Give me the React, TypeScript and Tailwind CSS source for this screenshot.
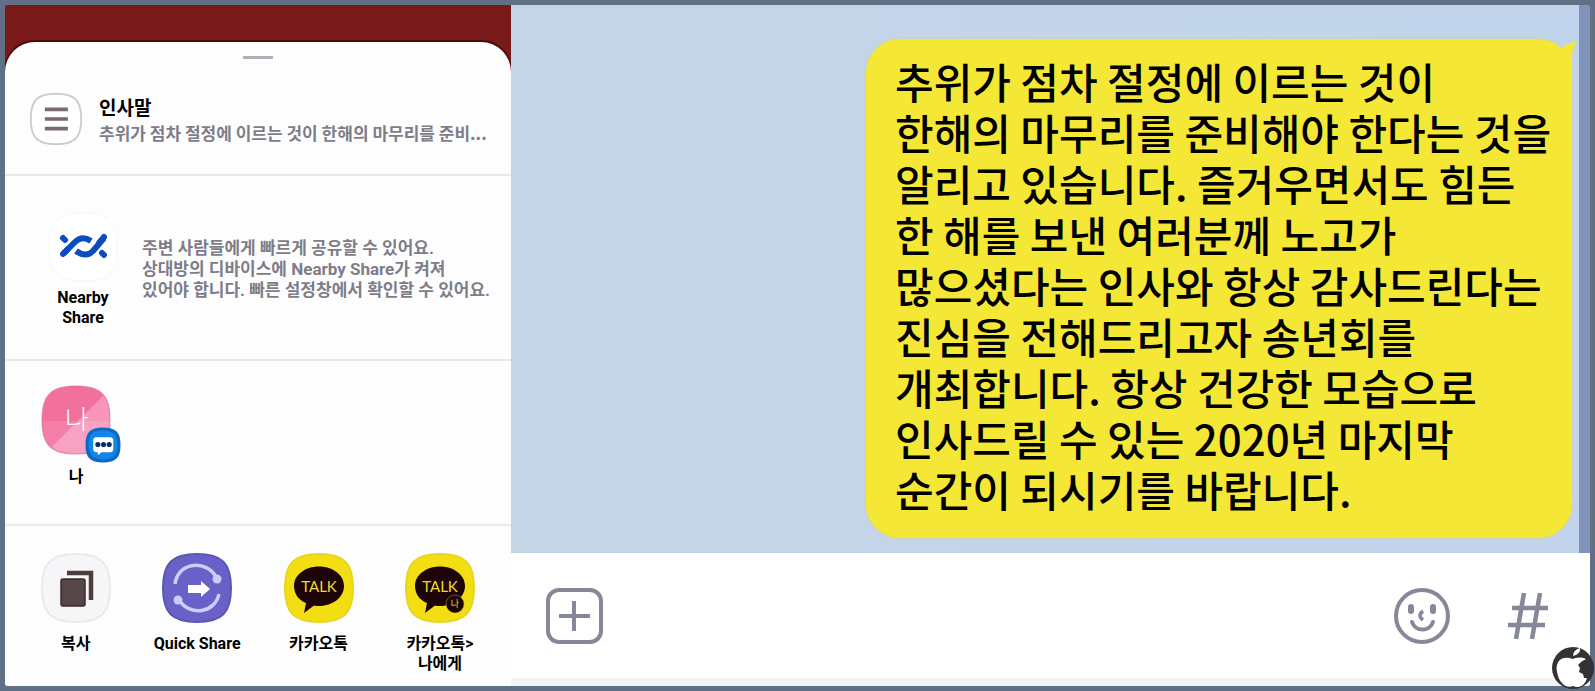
import React from "react";

const MESSAGE = [
  "추위가 점차 절정에 이르는 것이",
  "한해의 마무리를 준비해야 한다는 것을",
  "알리고 있습니다. 즐거우면서도 힘든",
  "한 해를 보낸 여러분께 노고가",
  "많으셨다는 인사와 항상 감사드린다는",
  "진심을 전해드리고자 송년회를",
  "개최합니다. 항상 건강한 모습으로",
  "인사드릴 수 있는 2020년 마지막",
  "순간이 되시기를 바랍니다.",
].join("\n");

const SQUIRCLE = "M35 1C60 1 69 10 69 35S60 69 35 69 1 60 1 35 10 1 35 1Z";

function NearbyIcon() {
  return (
    <svg viewBox="0 0 70 70" className="size-[70px]" fill="none">
      <path d={SQUIRCLE} fill="#fff" stroke="#f6f6f8" strokeWidth="1" />
      <g stroke="#0d4bc0" strokeWidth="6">
        <path d="M15 42L27 30Q34 23 43 29" />
        <path d="M28 39Q38 46 45 39L56 26" />
        <path d="M15 42L20 37M51 31L56 25" strokeLinecap="round" />
      </g>
      <path d="M15 26L17 28M54 41L56 43" stroke="#0d4bc0" strokeWidth="6" strokeLinecap="round" />
    </svg>
  );
}

function CopyIcon() {
  return (
    <svg viewBox="0 0 70 70" className="size-[70px]" fill="none">
      <path d={SQUIRCLE} fill="#f6f6f9" stroke="#e9e9ec" strokeWidth="2" />
      <path d="M26 20H50V47" stroke="#4a3d3c" strokeWidth="4.500" />
      <rect x="20" y="26" width="24" height="27" rx="2" fill="#564645" stroke="#372d2c" strokeWidth="1.500" />
    </svg>
  );
}

function QuickShareIcon() {
  return (
    <svg viewBox="0 0 70 70" className="size-[70px]" fill="none">
      <path d={SQUIRCLE} fill="#6961c8" stroke="#5c55b4" strokeWidth="2" />
      <path d="M13 31C16 8 45 7 54 24M57 41C53 60 28 64 17 47" stroke="#cfccfa" strokeWidth="3.500" />
      <circle cx="55" cy="26" r="4.500" fill="#cfccfa" />
      <circle cx="16" cy="47" r="4.500" fill="#cfccfa" />
      <path d="M26 32H39V28L48 36L39 44V40H26Z" fill="#fff" />
    </svg>
  );
}

function TalkIcon({ me = false }: { me?: boolean }) {
  return (
    <svg viewBox="0 0 70 70" className="size-[70px]">
      <path d={SQUIRCLE} fill="#f2de12" stroke="#e8d51f" strokeWidth="2" />
      <path d="M35 13.500C49 13.500 60 22 60 33S49 53 35 53Q32 53 30 52.500L20 60 22 50C14 47 10 40 10 33 10 22 21 13.500 35 13.500Z" fill="#1d0507" />
      <text x="35" y="39" textAnchor="middle" fontFamily="Lato, sans-serif" fontWeight="400" fontSize="15" fill="#eedb2c">TALK</text>
      {me && (
        <>
          <circle cx="50" cy="51" r="9" fill="#1d0507" stroke="#b8a51c" strokeWidth="0.500" />
          <text x="50" y="54" textAnchor="middle" fontFamily="Noto Sans CJK KR, sans-serif" fontWeight="400" fontSize="9" fill="#eedb2c">나</text>
        </>
      )}
    </svg>
  );
}

function Avatar() {
  return (
    <svg viewBox="0 0 70 70" className="size-[70px]">
      <defs>
        <clipPath id="avatar-shape">
          <path d={SQUIRCLE} />
        </clipPath>
      </defs>
      <g clipPath="url(#avatar-shape)">
        <path d="M0 0H70V70H0Z" fill="#f2709c" />
        <path d="M0 36H35V70H0Z" fill="#f47fa8" />
        <path d="M70 3V70H3Z" fill="#f796ba" />
        <path d="M37 36H70V70H3Z" fill="#f6a2c2" />
      </g>
      <path d={SQUIRCLE} fill="none" stroke="#de7199" strokeOpacity="0.500" strokeWidth="1.500" />
      <text x="36" y="44" textAnchor="middle" fontFamily="Noto Sans CJK KR, sans-serif" fontWeight="300" fontSize="26" fill="#fff">나</text>
    </svg>
  );
}

function MessageBadge() {
  return (
    <svg viewBox="0 0 70 70" className="absolute -right-[10px] -bottom-2 size-9">
      <path d={SQUIRCLE} fill="#0f68c2" />
      <path d="M35 7C55 7 63 15 63 35S55 63 35 63 7 55 7 35 15 7 35 7Z" fill="#0f86e8" />
      <path d="M22 20H49Q55 20 55 26V43Q55 49 49 49H32L25 55V49H22Q16 49 16 43V26Q16 20 22 20Z" fill="#fff" />
      <g fill="#0b2a66">
        <circle cx="25" cy="34" r="5" />
        <circle cx="36" cy="34" r="5" />
        <circle cx="47" cy="34" r="5" />
      </g>
    </svg>
  );
}

const APPS = [
  { label: "복사", icon: <CopyIcon /> },
  { label: "Quick Share", icon: <QuickShareIcon /> },
  { label: "카카오톡", icon: <TalkIcon /> },
  { label: "카카오톡>\n나에게", icon: <TalkIcon me /> },
];

function ShareSheet() {
  return (
    <aside className="flex flex-col bg-[#7b1a1b] pt-[37px]">
      <div className="flex-1 rounded-t-[30px] bg-[#fdfdfe] shadow-[0_-1px_1px_1px_#4a0a0c]">
        <header className="border-b-2 border-[#e8e9eb] pb-[29px]">
          <div className="mx-auto h-[17px] w-[30px] border-b-3 border-[#b0b0ba]" />
          <div className="mt-[34px] flex items-center gap-[17px] pr-6 pl-[25px]">
            <svg viewBox="0 0 70 70" className="size-[52px] shrink-0" fill="none">
              <path d={SQUIRCLE} fill="#fff" stroke="#cacad1" strokeWidth="2.500" />
              <path d="M20 22H51M20 35H51M20 48H51" stroke="#786b6a" strokeWidth="5" />
            </svg>
            <div className="min-w-0 font-['Noto_Sans_CJK_KR',sans-serif] font-bold">
              <h1 className="text-[19px] leading-7 text-black">인사말</h1>
              <p className="truncate text-[17px] leading-6 text-[#7d7d88]">
                추위가 점차 절정에 이르는 것이 한해의 마무리를 준비...
              </p>
            </div>
          </div>
        </header>

        <section className="flex items-center gap-[14px] border-b-2 border-[#e8e9eb] pt-9 pb-[31px] pl-[33px]">
          <button className="flex w-[90px] shrink-0 flex-col items-center gap-[6px] text-base leading-5 font-bold text-black">
            <NearbyIcon />
            Nearby Share
          </button>
          <p className="pb-[2px] text-[17px] leading-[21px] font-bold whitespace-pre-line text-[#7d7d88]">
            {"주변 사람들에게 빠르게 공유할 수 있어요.\n상대방의 디바이스에 Nearby Share가 켜져\n있어야 합니다. 빠른 설정창에서 확인할 수 있어요."}
          </p>
        </section>

        <section className="border-b-2 border-[#e8e9eb] pt-6 pb-[37px] pl-9">
          <button className="flex flex-col items-center gap-3 text-base leading-5 font-bold text-black">
            <span className="relative">
              <Avatar />
              <MessageBadge />
            </span>
            나
          </button>
        </section>

        <section className="grid grid-cols-4 items-start px-[10px] pt-[27px] pb-3">
          {APPS.map((app) => (
            <button key={app.label} className="flex flex-col items-center gap-[11px] text-base leading-5 font-bold whitespace-pre-line text-black">
              {app.icon}
              {app.label}
            </button>
          ))}
        </section>
      </div>
    </aside>
  );
}

function ChatRoom() {
  return (
    <main className="flex flex-col">
      <div className="flex-1 border-r-11 border-[#8093bb] bg-linear-to-r from-[#c4d5e6] to-[#c2d4ec] pt-[34px]">
        <div className="relative mr-[7px] ml-auto w-[706px] rounded-[34px] bg-[#f5e735] pt-4 pb-6 pl-[29px] shadow-[0_0_3px_#d8d27a]">
          <svg viewBox="0 0 28 40" className="absolute top-0 -right-[5px] h-10 w-7" fill="#f5e735">
            <path d="M12 10Q19 3 28 3Q23 8 23 18V40H5Z" />
          </svg>
          <p className="relative font-['Noto_Sans_CJK_KR',sans-serif] text-[42px] leading-[51px] font-medium whitespace-pre text-black">{MESSAGE}</p>
        </div>
      </div>
      <div className="flex h-[125px] items-center bg-white pr-[42px] pl-[34px] text-[#858899]">
        <button aria-label="추가">
          <svg viewBox="0 0 58 56" className="h-14 w-[58px]" fill="none" stroke="currentColor" strokeWidth="4">
            <rect x="3" y="2" width="53" height="52" rx="11" />
            <path d="M14 28H45M29 13V43" />
          </svg>
        </button>
        <input aria-label="메시지" className="min-w-0 flex-1 outline-none" />
        <button aria-label="이모티콘">
          <svg viewBox="0 0 58 58" className="size-[58px]" fill="none" stroke="currentColor" strokeWidth="4">
            <circle cx="29" cy="29" r="26" />
            <path d="M19 35C22 45 37 45 40 35" strokeLinecap="round" />
            <path d="M30 24Q24 28.500 30 33" strokeWidth="3.500" />
            <path d="M18 20V24M40 20V24" strokeWidth="6" strokeLinecap="round" />
          </svg>
        </button>
        <button aria-label="검색" className="ml-[57px]">
          <svg viewBox="0 0 40 46" className="h-[46px] w-10" fill="none" stroke="currentColor" strokeWidth="4.500">
            <path d="M16 0L8 46M32 0L24 46M4 15H40M0 32H37" />
          </svg>
        </button>
      </div>
      <div className="h-2 bg-[#f3f3f5]" />
    </main>
  );
}

export default function App() {
  return (
    <div className="relative min-h-screen bg-[#617085] p-[5px] font-[Roboto,'Noto_Sans_CJK_KR',sans-serif]">
      <div className="grid grid-cols-[505fr_1080fr] overflow-hidden rounded-[2px]">
        <ShareSheet />
        <ChatRoom />
      </div>
      <svg viewBox="0 0 44 44" className="absolute right-0 bottom-px size-11">
        <circle cx="22" cy="22" r="21" fill="#333335" />
        <path d="M22 13C10 9 4 16 6 26C8 37 15 43 22 40C29 43 34 39 36 32L33 32L32 28L28 26L29 22L27 19L30 16L35 13C29 10 24 12 22 13Z" fill="#fff" />
        <path d="M22 10Q22 4 29 2Q30 8 22 10Z" fill="#fff" />
      </svg>
    </div>
  );
}
